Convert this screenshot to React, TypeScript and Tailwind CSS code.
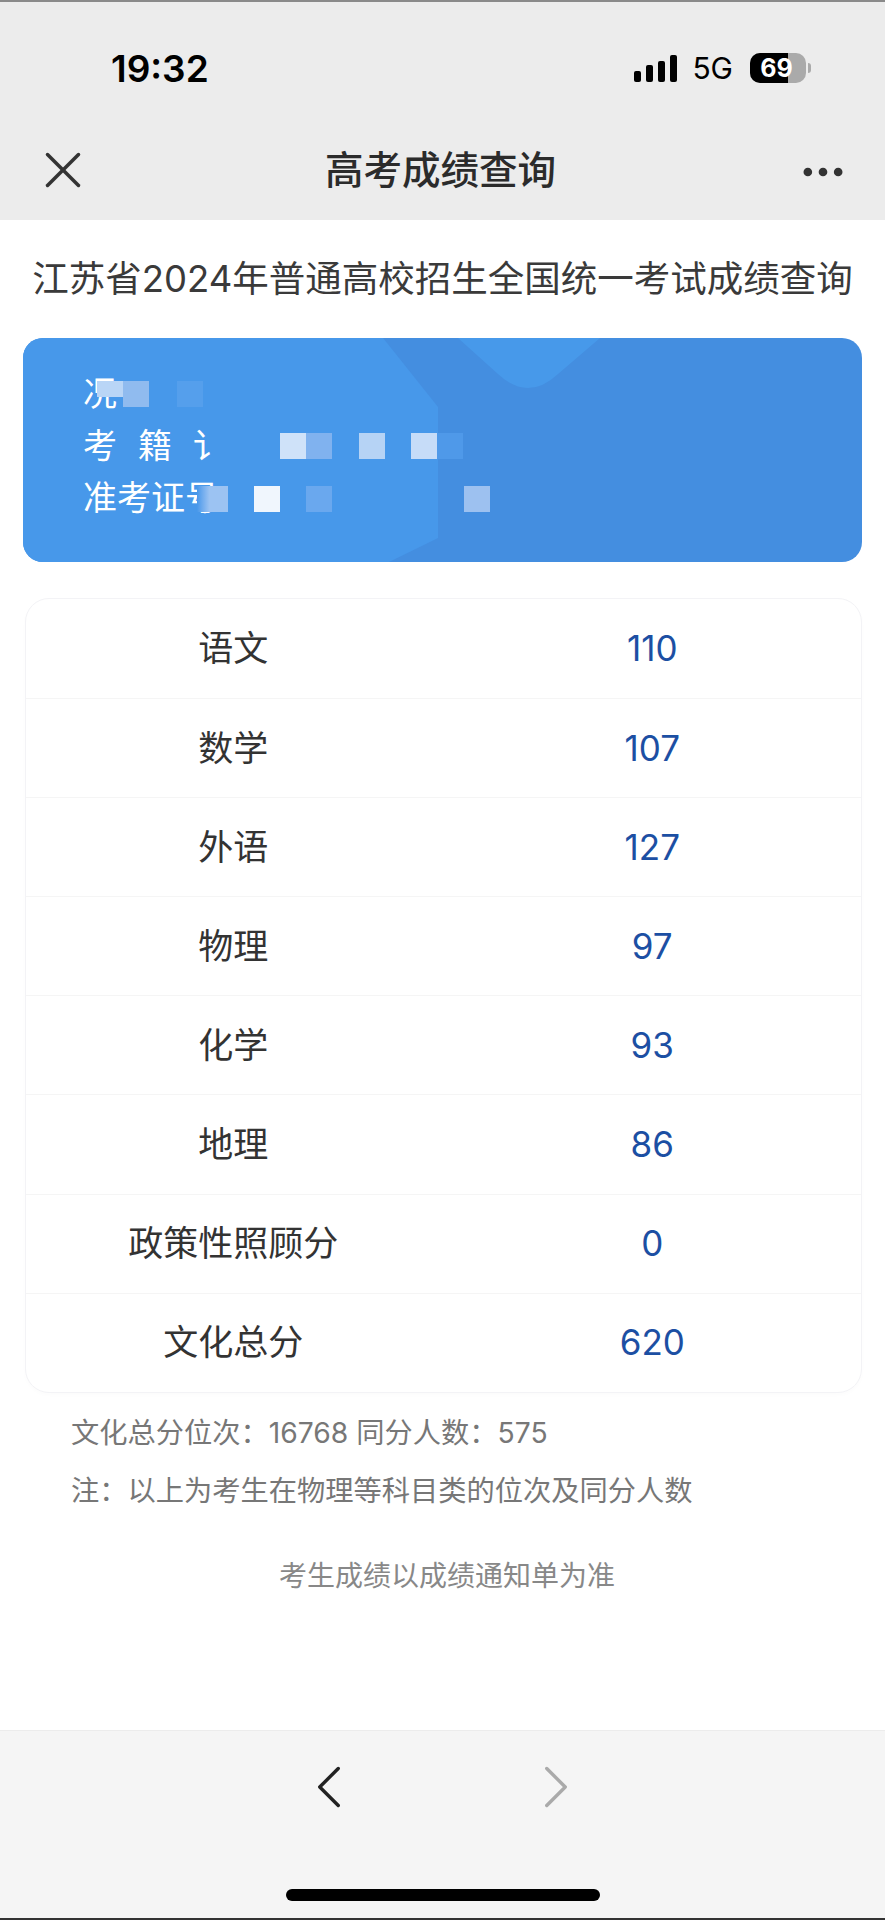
import { X, MoreHorizontal, ChevronLeft, ChevronRight } from "lucide-react";

const FONT = "font-['Inter','Noto_Sans_CJK_SC',sans-serif]";

const SCORES = [
  { name: "语文", value: "110" },
  { name: "数学", value: "107" },
  { name: "外语", value: "127" },
  { name: "物理", value: "97" },
  { name: "化学", value: "93" },
  { name: "地理", value: "86" },
  { name: "政策性照顾分", value: "0" },
  { name: "文化总分", value: "620" },
];

// the censoring blocks over the personal details
const MOSAIC = [
  "left-[74px] top-[43px] h-[16px] w-[26px] bg-[#b9d5f6]",
  "left-[100px] top-[43px] h-[26px] w-[26px] bg-[#90bbef]",
  "left-[154px] top-[43px] h-[26px] w-[26px] bg-[#559fec]",
  "left-[257px] top-[95px] h-[26px] w-[26px] bg-[#cfe2f9]",
  "left-[283px] top-[95px] h-[26px] w-[26px] bg-[#80b2ef]",
  "left-[336px] top-[95px] h-[26px] w-[26px] bg-[#b6d3f5]",
  "left-[388px] top-[95px] h-[26px] w-[26px] bg-[#c6dcf8]",
  "left-[414px] top-[95px] h-[26px] w-[26px] bg-[#4f99e9]",
  "left-[174px] top-[148px] h-[26px] w-[31px] bg-linear-to-r from-[#4798ea] to-[#9cc3f2] to-40%",
  "left-[231px] top-[148px] h-[26px] w-[26px] bg-[#f0f6fd]",
  "left-[283px] top-[148px] h-[26px] w-[26px] bg-[#6aa8ee]",
  "left-[441px] top-[148px] h-[26px] w-[26px] bg-[#9dc1f0]",
];

function StatusBar() {
  return (
    <div className="flex h-[132px] items-center justify-between pl-[111px] pr-[74px]">
      <span className="text-[37px] font-semibold leading-none text-black">19:32</span>
      <div className="flex items-center">
        <div className="flex h-[27px] items-end gap-[5px]">
          <span className="h-[11px] w-[7px] rounded-[2px] bg-black" />
          <span className="h-[17px] w-[7px] rounded-[2px] bg-black" />
          <span className="h-[21px] w-[7px] rounded-[2px] bg-black" />
          <span className="h-[27px] w-[7px] rounded-[2px] bg-black" />
        </div>
        <span className="ml-[15px] text-[30px] leading-none text-black">5G</span>
        <div className="relative ml-[17px] flex h-[30px] w-[56px] overflow-hidden rounded-[10px] bg-[#aaaaaa]">
          <div className="h-full w-[38px] bg-black" />
          <span className="absolute inset-0 pr-[3px] text-center text-[25px] font-bold leading-[30px] text-white">69</span>
        </div>
        <span className="ml-[2px] h-[10px] w-[3px] rounded-r-full bg-[#aaaaaa]" />
      </div>
    </div>
  );
}

function NavBar() {
  return (
    <div className="grid h-[86px] grid-cols-[1fr_auto_1fr] items-start pl-[32px] pr-[36px]">
      <X className="mt-[5px] h-[62px] w-[62px] text-[#333333]" strokeWidth={1.35} />
      <h1 className="mt-[12px] text-[38.5px] font-medium leading-[48px] text-[#2b2b2b]">高考成绩查询</h1>
      <MoreHorizontal className="mt-[12px] h-[52px] w-[52px] justify-self-end text-[#333333]" strokeWidth={2} />
    </div>
  );
}

function InfoCard() {
  return (
    <div className="relative mx-[23px] h-[224px] w-[839px] overflow-hidden rounded-[20px] bg-[#448ee0]">
      <svg className="absolute inset-0 h-full w-full" viewBox="0 0 839 224" aria-hidden="true">
        <path d="M0 0H360L415 69V200L366 224H0Z" fill="#4798ea" />
        <path d="M435 0L475 36Q505 64 535 36L577 0Z" fill="#4799ea" />
      </svg>
      <div className="relative pl-[60px] pt-[30px] text-[34px] leading-[52px] text-white">
        <div>况</div>
        <div className="tracking-[21px]">考籍讠</div>
        <div>准考证号</div>
      </div>
      {MOSAIC.map((block) => (
        <span key={block} className={`absolute ${block}`} />
      ))}
    </div>
  );
}

function ScoreTable() {
  return (
    <div className="mx-[25px] mt-[36px] w-[837px] rounded-[24px] border border-[#f3f3f6] shadow-[0_2px_4px_rgba(0,0,0,0.015)]">
      {SCORES.map((row, index) => (
        <div
          key={row.name}
          className={
            "grid h-[99.1px] grid-cols-2 items-center text-center "
            + (index > 0 ? "border-t border-[#f5f5f5]" : "")
          }
        >
          <span className="pr-[3px] text-[35px] text-[#333333]">{row.name}</span>
          <span className="text-[35px] text-[#1c4fa3]">{row.value}</span>
        </div>
      ))}
    </div>
  );
}

export default function App() {
  return (
    <div className={`flex h-[1920px] w-[885px] flex-col overflow-hidden bg-white ${FONT}`}>
      <header className="h-[220px] border-t-2 border-[#8a8a8a] bg-[#ececec]">
        <StatusBar />
        <NavBar />
      </header>
      <main className="flex-1">
        <div className="flex h-[118px] items-center justify-center text-[36.5px] text-[#3a3a3a]">
          江苏省2024年普通高校招生全国统一考试成绩查询
        </div>
        <InfoCard />
        <ScoreTable />
        <div className="mt-[11px] pl-[71px] text-[28.25px] leading-[58px] text-[#777777]">
          <p>文化总分位次：16768 同分人数：575</p>
          <p>注：以上为考生在物理等科目类的位次及同分人数</p>
        </div>
        <p className="mt-[36px] pl-[9px] text-center text-[28px] leading-[40px] text-[#888888]">考生成绩以成绩通知单为准</p>
      </main>
      <footer className="h-[190px] border-b-2 border-[#333333] border-t border-t-[#ececec] bg-[#f5f5f5]">
        <div className="flex h-[112px] items-center justify-center gap-[153px]">
          <ChevronLeft className="h-[74px] w-[74px] text-[#222222]" strokeWidth={1.1} />
          <ChevronRight className="h-[74px] w-[74px] text-[#aaaaaa]" strokeWidth={1.1} />
        </div>
        <div className="mx-auto mt-[46px] h-[12px] w-[314px] rounded-full bg-black" />
      </footer>
    </div>
  );
}
